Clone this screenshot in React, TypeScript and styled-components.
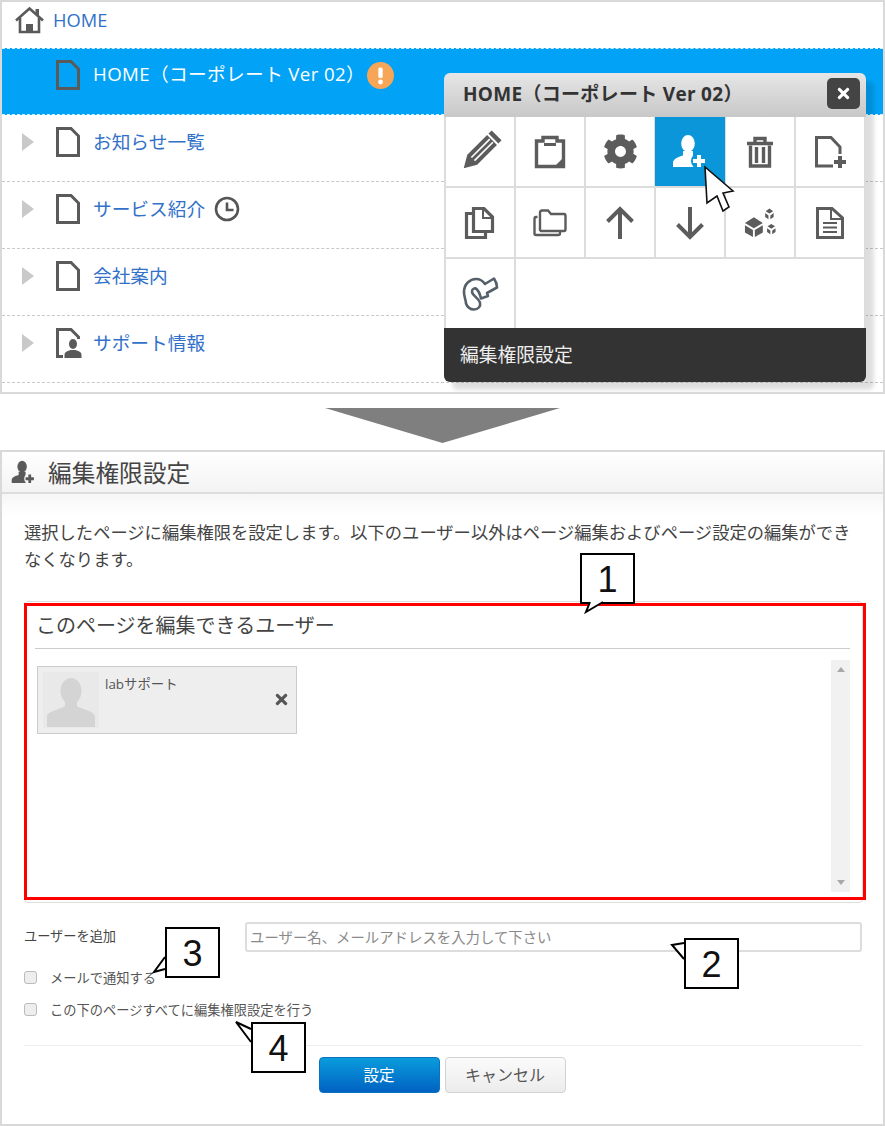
import React from "react";
import styled, { createGlobalStyle } from "styled-components";
import { FaCog, FaTimes } from "react-icons/fa";

const Global = createGlobalStyle`
  html, body { margin: 0; padding: 0; background: #fff; }
  * { box-sizing: border-box; }
  body { font-family: "Open Sans", "Noto Sans CJK JP", sans-serif; color: #444; }
`;

const Page = styled.div`
  position: relative;
  width: 885px;
  height: 1126px;
  overflow: hidden;
  background: #fff;
`;

const TreePanel = styled.section`
  position: relative;
  width: 885px;
  height: 394px;
  border: 2px solid #d9d9d9;
  overflow: hidden;
`;

const RootRow = styled.div`
  display: flex;
  align-items: center;
  height: 46px;
  padding: 0 0 11px 13px;
  gap: 9px;
  color: #3271c9;
  font-size: 18.3px;
`;

const TreeRow = styled.div<{ $selected?: boolean }>`
  display: flex;
  align-items: center;
  height: 67px;
  padding: 0 0 13px 20px;
  border-bottom: 1px dashed ${(p) => (p.$selected ? "#d5eefc" : "#c9c9c9")};
  border-top: ${(p) => (p.$selected ? "1px dashed #d5eefc" : "0")};
  background: ${(p) => (p.$selected ? "#02a3f6" : "#fff")};
  color: ${(p) => (p.$selected ? "#fff" : "#3271c9")};
  font-size: 18.7px;
`;

const Expander = styled.span<{ $hidden?: boolean }>`
  width: 0;
  height: 0;
  margin-right: 22px;
  border-left: 12px solid ${(p) => (p.$hidden ? "transparent" : "#c9c9c9")};
  border-top: 9px solid transparent;
  border-bottom: 9px solid transparent;
`;

const PageTitle = styled.span<{ $wide?: boolean }>`
  margin: 0 ${(p) => (p.$wide ? 2 : 9)}px ${(p) => (p.$wide ? 5 : 2)}px 13px;
  white-space: nowrap;
  letter-spacing: ${(p) => (p.$wide ? 0.35 : 0)}px;
`;

const Popup = styled.div`
  position: absolute;
  left: 442px;
  top: 71px;
  width: 422px;
  border-radius: 6px;
  box-shadow: 8px 8px 4px rgba(0, 0, 0, 0.13);
  overflow: hidden;
`;

const PopupHead = styled.header`
  display: flex;
  align-items: center;
  justify-content: space-between;
  height: 44px;
  padding: 0 6px 4px 19px;
  background: linear-gradient(#e6e6e6, #c8c8c8);
  color: #333;
  font-size: 19px;
  letter-spacing: 0.3px;
  font-weight: 700;
`;

const CloseBtn = styled.span`
  display: flex;
  align-items: center;
  justify-content: center;
  width: 33px;
  height: 31px;
  border-radius: 5px;
  background: #444;
  color: #fff;
  font-size: 17px;
`;

const ToolGrid = styled.div`
  display: grid;
  grid-template-columns: repeat(6, 1fr);
  grid-auto-rows: 69px;
  gap: 2px;
  padding: 0 2px;
  background: #dcdcdc;
`;

const ToolCell = styled.div<{ $active?: boolean; $span?: number }>`
  display: flex;
  align-items: center;
  justify-content: center;
  grid-column: span ${(p) => p.$span ?? 1};
  margin: 0 ${(p) => (p.$active ? -1 : 0)}px;
  background: ${(p) => (p.$active ? "#0a96d9" : "#fff")};
  color: ${(p) => (p.$active ? "#fff" : "#5c5c5c")};
  font-size: 35px;
`;

const PopupFoot = styled.footer`
  display: flex;
  align-items: center;
  height: 54px;
  padding: 0 0 2px 16px;
  background: #333;
  color: #eee;
  font-size: 18.8px;
`;

const Arrow = styled.svg`
  display: block;
  margin: 14px auto 7px;
`;

const DialogPanel = styled.section`
  width: 885px;
  height: 676px;
  border: 2px solid #d9d9d9;
`;

const DialogHead = styled.header`
  display: flex;
  align-items: center;
  gap: 12px;
  height: 42px;
  padding-left: 9px;
  border-bottom: 2px solid #ddd;
  background: linear-gradient(#fff, #f3f3f3);
  color: #444;
  font-size: 23.7px;
`;

const DialogBody = styled.div`
  padding: 25px 21px 0 22px;
  background: linear-gradient(#f6f6f6, #fff 22px);
`;

const Lead = styled.p`
  margin: 0 0 28px;
  font-size: 17.3px;
  line-height: 27px;
  color: #444;
`;

const UserCard = styled.div`
  position: relative;
  width: 839px;
  height: 302px;
  padding: 0 12px 0 10px;
  border: 1px solid #ddd;
  border-radius: 4px;
  &::after {
    content: "";
    position: absolute;
    top: 1px;
    left: -1px;
    right: -4px;
    bottom: 2px;
    border: 3px solid #f00;
  }
`;

const CardTitle = styled.h2`
  display: flex;
  align-items: center;
  height: 47px;
  margin: 0;
  padding: 0 0 1px 1px;
  border-bottom: 1px solid #ccc;
  font-size: 20px;
  font-weight: 400;
  color: #444;
`;

const UserList = styled.div`
  display: flex;
  justify-content: space-between;
  align-items: flex-start;
  height: 232px;
  margin-top: 11px;
`;

const UserChip = styled.div`
  display: flex;
  position: relative;
  width: 260px;
  height: 68px;
  margin: 6px 0 0 2px;
  padding: 5px;
  gap: 6px;
  border: 1px solid #ccc;
  background: #eee;
`;

const Avatar = styled.svg`
  display: block;
  background: #e9e9e9;
`;

const UserName = styled.span`
  font-size: 13.4px;
  line-height: 26px;
  margin-top: -1px;
  color: #555;
`;

const RemoveUser = styled.span`
  position: absolute;
  right: 6px;
  top: 24px;
  color: #555;
  font-size: 17px;
  display: flex;
`;

const ScrollTrack = styled.div`
  display: flex;
  flex-direction: column;
  justify-content: space-between;
  align-items: center;
  width: 19px;
  height: 232px;
  padding: 7px 0;
  background: #f1f1f1;
`;

const ScrollCaret = styled.span<{ $down?: boolean }>`
  width: 0;
  height: 0;
  border-left: 4px solid transparent;
  border-right: 4px solid transparent;
  ${(p) => (p.$down ? "border-top: 5px solid #a8a8a8;" : "border-bottom: 5px solid #a8a8a8;")}
`;

const AddRow = styled.div`
  display: flex;
  align-items: center;
  margin-top: 19px;
  height: 30px;
`;

const FieldLabel = styled.label`
  width: 221px;
  font-size: 13.2px;
  padding-bottom: 4px;
  color: #444;
`;

const UserInput = styled.input`
  width: 617px;
  height: 30px;
  padding: 0 3px 2px;
  border: 2px solid #ddd;
  border-radius: 3px;
  font: 14.4px "Noto Sans CJK JP", sans-serif;
  &::placeholder { color: #8a8a8a; opacity: 1; }
`;

const CheckRow = styled.label`
  display: flex;
  align-items: center;
  height: 32px;
  gap: 13px;
  font-size: 13.25px;
  color: #555;
`;

const CheckOptions = styled.div`
  margin-top: 9px;
`;

const Check = styled.input.attrs({ type: "checkbox" })`
  appearance: none;
  width: 13px;
  height: 13px;
  margin: 0;
  border: 1px solid #bbb;
  border-radius: 3px;
  background: #eee;
`;

const Divider = styled.hr`
  margin: 20px 0 11px;
  border: 0;
  border-top: 1px solid #eee;
  width: 838px;
`;

const Buttons = styled.div`
  display: flex;
  justify-content: center;
  gap: 5px;
  width: 836px;
`;

const Button = styled.button<{ $primary?: boolean }>`
  width: 121px;
  height: 36px;
  border-radius: 4px;
  border: 1px solid ${(p) => (p.$primary ? "#0b72c0" : "#d2d2d2")};
  background: ${(p) =>
    p.$primary ? "linear-gradient(#0a9cdc, #0062c2)" : "linear-gradient(#fbfbfb, #ececec)"};
  color: ${(p) => (p.$primary ? "#fff" : "#555")};
  font: ${(p) => (p.$primary ? "15.5px" : "16px")} "Noto Sans CJK JP", sans-serif;
  padding: 0 0 3px;
`;

const CalloutBox = styled.div<{ $x: number; $y: number }>`
  position: absolute;
  left: ${(p) => p.$x}px;
  top: ${(p) => p.$y}px;
  width: 55px;
  height: 51px;
  padding-top: 2px;
  border: 2px solid #000;
  background: #fff;
  display: flex;
  align-items: center;
  justify-content: center;
  font: 36px "Liberation Sans", sans-serif;
  color: #111;
`;

const Tail = styled.svg`
  position: absolute;
  left: -2px;
  top: -2px;
  overflow: visible;
`;

const CursorMark = styled.svg`
  position: absolute;
  left: 704px;
  top: 166px;
  overflow: visible;
`;

const SupportSvg = styled.svg`
  margin-right: -2px;
`;

function Callout({ n, x, y, tail }: { n: number; x: number; y: number; tail: string }) {
  return (
    <CalloutBox $x={x} $y={y}>
      {n}
      <Tail width="55" height="51">
        <polygon points={tail} fill="#fff" />
        <polyline points={tail} fill="none" stroke="#000" strokeWidth="2" />
      </Tail>
    </CalloutBox>
  );
}

const Ico = ({ w = 34, h = 34, vb = "0 0 34 34", children }: { w?: number; h?: number; vb?: string; children: React.ReactNode }) => (
  <svg width={w} height={h} viewBox={vb} fill="none" stroke="currentColor" strokeWidth="3" overflow="visible">
    {children}
  </svg>
);

const HomeIcon = () => (
  <svg width="29" height="28" viewBox="0 0 29 28" fill="none" stroke="#5a5a5a" strokeWidth="2.6">
    <path d="M1 14.5 14.5 2.5 28 14.5" strokeLinejoin="miter" />
    <path d="M5 12v14h19V12" />
    <rect x="11" y="18" width="7" height="8" fill="#5a5a5a" stroke="none" />
    <rect x="20.5" y="3" width="3.5" height="6" fill="#5a5a5a" stroke="none" />
  </svg>
);

const FileIcon = () => (
  <svg width="24" height="30" viewBox="0 0 24 30" fill="none" stroke="#5a5a5a" strokeWidth="3">
    <path d="M1.5 1.5H15L22.5 9V28.5H1.5Z" />
  </svg>
);

const SupportFileIcon = () => (
  <SupportSvg width="26" height="30" viewBox="0 0 26 30" fill="none">
    <path d="M7 28.5H1.5V1.5H15L22.5 9V11" stroke="#5a5a5a" strokeWidth="3" />
    <ellipse cx="17" cy="16" rx="4" ry="5" fill="#5a5a5a" />
    <path d="M8.5 30v-3c0-3 3-4 6-5h5c3 1 6 2 6 5v3Z" fill="#5a5a5a" />
  </SupportSvg>
);

const ClockIcon = () => (
  <svg width="26" height="26" viewBox="0 0 26 26" fill="none" stroke="#555" strokeWidth="2.6">
    <circle cx="13" cy="13" r="11" />
    <path d="M13 6.5V14H19.5" />
  </svg>
);

const WarnIcon = () => (
  <svg width="27" height="27" viewBox="0 0 27 27">
    <circle cx="13.5" cy="13.5" r="13.5" fill="#f7a557" />
    <rect x="11.3" y="5.5" width="4.4" height="10.5" rx="1.5" fill="#fff" />
    <circle cx="13.5" cy="20" r="2.4" fill="#fff" />
  </svg>
);

const UserPlus = ({ size = 36, color = "currentColor", knock = "#0a96d9" }: { size?: number; color?: string; knock?: string }) => (
  <svg width={size} height={size} viewBox="0 0 36 36">
    <ellipse cx="16" cy="9.5" rx="6.8" ry="8.5" fill={color} />
    <path d="M1 33v-4c0-4 5-6 10-7.5V17h10v4.5c3 1 5 1.5 7 3V33Z" fill={color} />
    <circle cx="27" cy="27" r="8" fill={knock} />
    <path d="M27 21v12M21 27h12" stroke={color} strokeWidth="4" />
  </svg>
);

const Pencil = () => (
  <Ico>
    <g transform="rotate(45 17 17)">
      <path d="M10 -6.5H24V-2H10Z M10 0H24V28L17 40 10 28Z" fill="currentColor" stroke="none" />
      <path d="M14.8 1V27M19.2 1V27" stroke="#fff" strokeWidth="1.6" />
    </g>
  </Ico>
);

const Clipboard = () => (
  <Ico>
    <path d="M3.5 6H10V2.5H24V6H30.5V31.5H3.5Z" strokeWidth="3.4" />
    <path d="M11 9.5H23" strokeWidth="3" />
    <path d="M30 23 21 32H30Z" fill="currentColor" stroke="none" />
  </Ico>
);

const Trash = () => (
  <Ico>
    <path d="M4 8.5H30M12 7V3.5H22V7" strokeWidth="3.4" />
    <path d="M7.5 10.5V31H26.5V10.5" strokeWidth="3.4" />
    <path d="M13.5 12V28M20.5 12V28" strokeWidth="3.4" />
  </Ico>
);

const FilePlus = () => (
  <Ico>
    <path d="M20 31H3.5V2.5H18L27 12V19" strokeWidth="3" />
    <path d="M27 21V33M21 27H33" strokeWidth="4" />
  </Ico>
);

const Copies = () => (
  <Ico>
    <path d="M9.5 7.5H3.5V31.5H22.5V26" strokeWidth="3.2" />
    <path d="M10.5 2.5H21L29.5 11V25.5H10.5Z" strokeWidth="3.2" />
    <path d="M20 3V12H29" strokeWidth="2" />
  </Ico>
);

const Folders = () => (
  <Ico>
    <path d="M7 24V6.5Q7 4.5 9 4.5H15L18 8H31Q32.5 8 32.5 10V23Q32.5 25 31 25H8Z" strokeWidth="2.4" />
    <path d="M4.5 11H3Q1.5 11 1.5 13V27.5Q1.5 29 3 29H25Q27 29 27 27.5V26" strokeWidth="2.4" />
  </Ico>
);

const Up = () => (
  <Ico>
    <path d="M17 33V3M4.5 15.5 17 3 29.5 15.5" strokeWidth="4" />
  </Ico>
);

const Down = () => (
  <Ico>
    <path d="M17 1V31M4.5 18.5 17 31 29.5 18.5" strokeWidth="4" />
  </Ico>
);

const Cubes = () => (
  <svg width="32" height="32" viewBox="0 0 34 34" fill="currentColor">
    <path d="M1 17 10.5 11 20 17 10.5 22.5Z" />
    <path d="M1 19.5 9.5 24.5V32L1 27Z M11.5 24.5 20 19.5V27L11.5 32Z" />
    <path d="M23 4.5 27 1.5 31 4.5 27 7ZM22.5 6.5 26 9V13L22.5 10.5ZM28 9 31.5 6.5V10.5L28 13Z" />
    <path d="M25 20.5 29 18 33 20.5 29 23ZM24.5 22.5 28 25V29L24.5 26.5ZM30 25 33.5 22.5V26.5L30 29Z" />
  </svg>
);

const DocLines = () => (
  <Ico>
    <path d="M4.5 2.5H19L29.5 12V31.5H4.5Z" strokeWidth="3" />
    <path d="M18 3V13H29" strokeWidth="2" />
    <path d="M10 17H24M10 21.5H24M10 26H24" strokeWidth="2.2" />
  </Ico>
);

const Blob = () => (
  <svg width="38" height="36" viewBox="0 0 38 36" fill="none" stroke="#56606a" strokeWidth="2.6" strokeLinejoin="round">
    <path d="M3 16C3 8 9 3 15 3c4 0 7 2 9 5L33 2.5c2 3 3 6 3 9L26 17l1 3-7 2.5c-1-3-1-6-4-9-2-2-5-1-5 2 0 4 6 6 8 11 1 4-2 7-6 7-4 0-7-3-8-6C5 24 3 21 3 16Z" />
  </svg>
);

export default function App() {
  return (
    <Page>
      <Global />
      <TreePanel>
        <RootRow>
          <HomeIcon />
          HOME
        </RootRow>
        <TreeRow $selected>
          <Expander $hidden />
          <FileIcon />
          <PageTitle $wide>HOME（コーポレート Ver 02）</PageTitle>
          <WarnIcon />
        </TreeRow>
        <TreeRow>
          <Expander />
          <FileIcon />
          <PageTitle>お知らせ一覧</PageTitle>
        </TreeRow>
        <TreeRow>
          <Expander />
          <FileIcon />
          <PageTitle>サービス紹介</PageTitle>
          <ClockIcon />
        </TreeRow>
        <TreeRow>
          <Expander />
          <FileIcon />
          <PageTitle>会社案内</PageTitle>
        </TreeRow>
        <TreeRow>
          <Expander />
          <SupportFileIcon />
          <PageTitle>サポート情報</PageTitle>
        </TreeRow>
        <Popup>
          <PopupHead>
            HOME（コーポレート Ver 02）
            <CloseBtn>
              <FaTimes />
            </CloseBtn>
          </PopupHead>
          <ToolGrid>
            <ToolCell><Pencil /></ToolCell>
            <ToolCell><Clipboard /></ToolCell>
            <ToolCell><FaCog /></ToolCell>
            <ToolCell $active><UserPlus /></ToolCell>
            <ToolCell><Trash /></ToolCell>
            <ToolCell><FilePlus /></ToolCell>
            <ToolCell><Copies /></ToolCell>
            <ToolCell><Folders /></ToolCell>
            <ToolCell><Up /></ToolCell>
            <ToolCell><Down /></ToolCell>
            <ToolCell><Cubes /></ToolCell>
            <ToolCell><DocLines /></ToolCell>
            <ToolCell><Blob /></ToolCell>
            <ToolCell $span={5} />
          </ToolGrid>
          <PopupFoot>編集権限設定</PopupFoot>
        </Popup>
      </TreePanel>

      <Arrow width="235" height="35" viewBox="0 0 235 35">
        <polygon points="0,0 235,0 117.5,35" fill="#7f7f7f" />
      </Arrow>

      <DialogPanel>
        <DialogHead>
          <UserPlus size={25} color="#5a5a5a" knock="#f8f8f8" />
          編集権限設定
        </DialogHead>
        <DialogBody>
          <Lead>
            選択したページに編集権限を設定します。以下のユーザー以外はページ編集およびページ設定の編集ができなくなります。
          </Lead>
          <UserCard>
            <CardTitle>このページを編集できるユーザー</CardTitle>
            <UserList>
              <UserChip>
                <Avatar width="56" height="56" viewBox="0 0 56 56">
                  <ellipse cx="28" cy="19" rx="10.5" ry="13" fill="#d4d4d4" />
                  <path d="M4 55V45c0-6 12-7 18-11V26h12v8c6 4 18 5 18 11v10Z" fill="#d4d4d4" />
                </Avatar>
                <UserName>labサポート</UserName>
                <RemoveUser>
                  <FaTimes />
                </RemoveUser>
              </UserChip>
              <ScrollTrack>
                <ScrollCaret />
                <ScrollCaret $down />
              </ScrollTrack>
            </UserList>
          </UserCard>
          <AddRow>
            <FieldLabel>ユーザーを追加</FieldLabel>
            <UserInput placeholder="ユーザー名、メールアドレスを入力して下さい" />
          </AddRow>
          <CheckOptions>
            <CheckRow>
              <Check />
              メールで通知する
            </CheckRow>
            <CheckRow>
              <Check />
              この下のページすべてに編集権限設定を行う
            </CheckRow>
          </CheckOptions>
          <Divider />
          <Buttons>
            <Button $primary>設定</Button>
            <Button>キャンセル</Button>
          </Buttons>
        </DialogBody>
      </DialogPanel>

      <CursorMark width="30" height="46" viewBox="0 0 30 46">
        <polygon
          points="1,1 3,37 13,30 19,45 25,41 19,27 29,25"
          fill="#fff"
          stroke="#111"
          strokeWidth="1.6"
        />
      </CursorMark>

      <Callout n={1} x={580} y={553} tail="10,49 6,59 23,49" />
      <Callout n={2} x={684} y={938} tail="0,5 -12,7 0,21" />
      <Callout n={3} x={165} y={927} tail="0,30 -11,45 0,42" />
      <Callout n={4} x={251} y={1022} tail="0,7 -15,0 0,20" />
    </Page>
  );
}
